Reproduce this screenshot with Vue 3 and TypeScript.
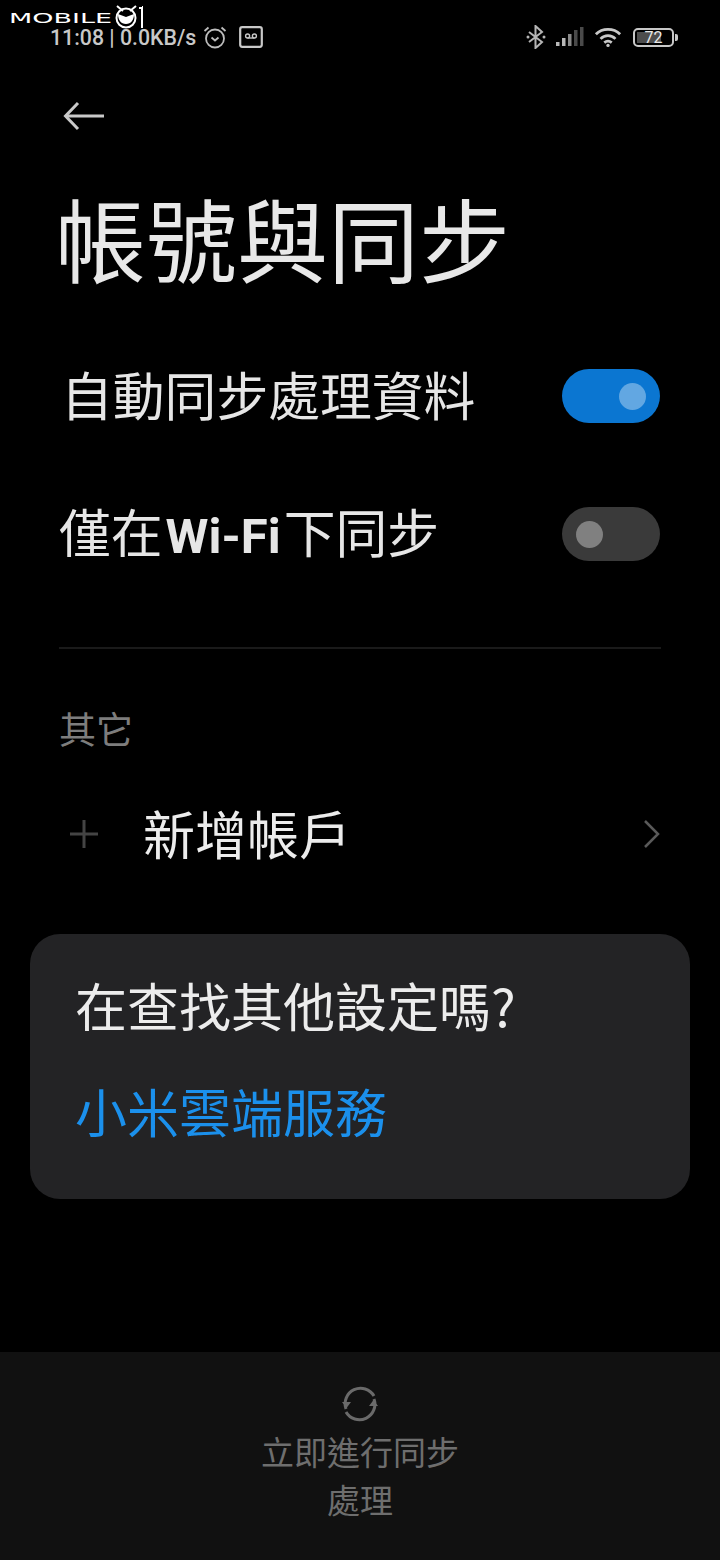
<script setup lang="ts">
const signalBars = [
  { x: 0, h: 4, o: 1 },
  { x: 6, h: 8, o: 1 },
  { x: 12, h: 12, o: 0.75 },
  { x: 18, h: 16, o: 0.4 },
  { x: 24, h: 19, o: 0.4 },
]

const settings = [
  { key: 'auto', before: '自動同步處理資料', latin: '', after: '', on: true, inset: true },
  { key: 'wifi', before: '僅在', latin: 'Wi-Fi', after: '下同步', on: false, inset: false },
]
</script>

<template>
  <div class="screen">
    <div class="watermark">
      <svg width="150" height="32" viewBox="0 0 150 32">
        <text x="9" y="23" textLength="103" lengthAdjust="spacingAndGlyphs" class="wm-text">MOBILE</text>
        <circle cx="126" cy="18" r="9.500" fill="none" stroke="#fff" stroke-width="2" />
        <path d="M117 6l6 5M136 6l-6 5" stroke="#fff" stroke-width="2" fill="none" />
        <path d="M118 14l8 3 8-3c0 6-3 10-8 10s-8-4-8-10z" fill="#fff" />
        <path d="M139 7h3V6h1v22h-2V9h-2z" fill="#fff" />
      </svg>
    </div>

    <header class="status">
      <div class="status-left">
        <span class="clock">11:08 | 0.0KB/s</span>
        <svg class="alarm" width="24" height="24" viewBox="0 0 24 24" fill="none" stroke="#bdbdbd" stroke-width="1.800">
          <circle cx="12" cy="13.500" r="9" />
          <path d="M8.500 12.500l3.500 3 3.500-3" />
          <path d="M1.500 6l4-3.500M22.500 6l-4-3.500" />
        </svg>
        <svg class="voicemail" width="24" height="22" viewBox="0 0 24 22" fill="none" stroke="#c8c8c8">
          <rect x="1.200" y="1.200" width="21.600" height="19.600" rx="2" stroke-width="2.200" />
          <circle cx="8.600" cy="10" r="2" stroke-width="1.400" />
          <circle cx="15.400" cy="10" r="2" stroke-width="1.400" />
          <path d="M8.600 12h6.800" stroke-width="1.400" />
        </svg>
      </div>
      <div class="status-right">
        <svg class="bt" width="20" height="24" viewBox="0 0 20 24" fill="none" stroke="#b5b5b5" stroke-width="2">
          <path d="M3 7l13 10-6.500 6V1L16 7 3 17" />
          <circle cx="2" cy="12" r="1.500" fill="#b5b5b5" stroke="none" />
          <circle cx="18" cy="12" r="1.500" fill="#b5b5b5" stroke="none" />
        </svg>
        <svg class="signal" width="28" height="20" viewBox="0 0 28 20">
          <rect v-for="b in signalBars" :key="b.x" :x="b.x" :y="19 - b.h" width="3.500" :height="b.h" fill="#b8b8b8" :opacity="b.o" />
        </svg>
        <svg class="wifi" width="28" height="22" viewBox="0 0 30 22" fill="none" stroke="#c8c8c8" stroke-width="3">
          <path d="M2 8c7-7 19-7 26 0" />
          <path d="M7 13c4.500-4.500 11.500-4.500 16 0" />
          <path d="M11 17c2.500-2 5.500-2 8 0" />
          <circle cx="15" cy="20" r="1.800" fill="#c8c8c8" stroke="none" />
        </svg>
        <div class="battery">
          <div class="battery-body">
            <div class="battery-fill"></div>
            <span class="battery-num">72</span>
          </div>
          <div class="battery-tip"></div>
        </div>
      </div>
    </header>

    <div class="nav">
      <svg width="42" height="32" viewBox="0 0 42 32" fill="none" stroke="#c9c9c9" stroke-width="3">
        <path d="M41 16H3" />
        <path d="M15 3L2.500 16 15 29" />
      </svg>
    </div>

    <h1 class="title">帳號與同步</h1>

    <section class="rows">
      <div v-for="s in settings" :key="s.key" class="row">
        <span class="row-label" :class="{ inset: s.inset }">{{ s.before }}<b v-if="s.latin" class="latin">{{ s.latin }}</b>{{ s.after }}</span>
        <div class="switch" :class="{ on: s.on }"><div class="knob"></div></div>
      </div>
    </section>

    <div class="divider"></div>

    <div class="section-title">其它</div>

    <div class="add-row">
      <svg class="plus" width="30" height="30" viewBox="0 0 30 30" stroke="#444" stroke-width="3">
        <path d="M15 1v28M1 15h28" />
      </svg>
      <span class="add-label">新增帳戶</span>
      <svg class="chevron" width="18" height="30" viewBox="0 0 18 30" fill="none" stroke="#5a5a5a" stroke-width="2.500">
        <path d="M3 2l13 13L3 28" />
      </svg>
    </div>

    <div class="card">
      <div class="card-q">在查找其他設定嗎?</div>
      <div class="card-link">小米雲端服務</div>
    </div>

    <footer class="bottom">
      <svg width="38" height="38" viewBox="0 0 38 38" fill="none" stroke="#6a6a6a" stroke-width="3">
        <path d="M5 24A15.500 15.500 0 0 1 33 11" />
        <path d="M33 14A15.500 15.500 0 0 1 5 27" />
        <path d="M1 17h9l-4.500 6zM37 21h-9l4.500-6z" fill="#6a6a6a" stroke="none" />
      </svg>
      <div class="bottom-label">立即進行同步<br />處理</div>
    </footer>
  </div>
</template>

<style scoped>
.screen {
  position: relative;
  width: 720px;
  height: 1560px;
  background: #000;
  color: #e6e6e6;
  font-family: "Noto Sans CJK TC", "Noto Sans", sans-serif;
  overflow: hidden;
  display: flex;
  flex-direction: column;
}

.watermark {
  position: absolute;
  left: 0;
  top: 0;
}

.wm-text {
  font-family: "DejaVu Sans", sans-serif;
  font-size: 14px;
  fill: #fff;
}

.status {
  height: 74px;
  box-sizing: border-box;
  padding: 24px 42px 0 50px;
  display: flex;
  justify-content: space-between;
  align-items: flex-start;
}

.status-left,
.status-right {
  display: flex;
  align-items: center;
  height: 26px;
}

.clock {
  font-family: Roboto, sans-serif;
  font-weight: 500;
  font-size: 21.300px;
  color: #c8c8c8;
}

.alarm {
  margin-left: 7px;
}

.voicemail {
  margin-left: 12px;
}

.bt {
  margin-right: 10px;
}

.signal {
  margin-right: 10px;
}

.wifi {
  margin-right: 11px;
}

.battery {
  display: flex;
  align-items: center;
  gap: 1px;
}

.battery-body {
  position: relative;
  width: 37px;
  height: 15px;
  border: 2px solid #c8c8c8;
  border-radius: 5px;
  box-sizing: content-box;
}

.battery-fill {
  position: absolute;
  left: 2px;
  top: 2px;
  bottom: 2px;
  width: 24px;
  background: #4d4d4d;
}

.battery-num {
  position: absolute;
  inset: 0;
  text-align: center;
  line-height: 16px;
  font-family: Roboto, sans-serif;
  font-size: 16px;
  color: #e8e8e8;
}

.battery-tip {
  width: 3px;
  height: 7px;
  background: #c8c8c8;
  border-radius: 0 2px 2px 0;
}

.nav {
  height: 84px;
  padding-left: 63px;
  display: flex;
  align-items: center;
}

.title {
  margin: 0;
  padding-left: 55px;
  font-size: 91px;
  font-weight: 400;
  line-height: 130px;
  height: 130px;
  margin-top: 13px;
  color: #e8e8e8;
}

.rows {
  margin-top: 26px;
}

.row {
  height: 138px;
  box-sizing: border-box;
  padding: 0 60px 0 59px;
  display: flex;
  justify-content: space-between;
  align-items: center;
}

.row-label {
  font-size: 51.800px;
  line-height: 70px;
}

.row-label.inset {
  padding-left: 2px;
  padding-bottom: 4px;
}

.latin {
  font-family: Roboto, sans-serif;
  font-weight: 700;
  font-size: 49px;
  margin: 0 3px;
}

.switch {
  width: 98px;
  height: 54px;
  border-radius: 27px;
  background: #3a3a3a;
  padding: 0 14px;
  box-sizing: border-box;
  display: flex;
  align-items: center;
}

.switch.on {
  background: #0b76d1;
  justify-content: flex-end;
}

.knob {
  width: 27px;
  height: 27px;
  border-radius: 50%;
  background: #808080;
}

.switch.on .knob {
  background: #62a7e2;
}

.divider {
  height: 2px;
  margin: 44px 59px 0 59px;
  background: #1a1a1a;
}

.section-title {
  margin-top: 54px;
  padding-left: 59px;
  font-size: 37px;
  line-height: 50px;
  color: #7d7d7d;
}

.add-row {
  margin-top: 56px;
  height: 50px;
  padding: 0 60px 0 69px;
  display: flex;
  align-items: center;
}

.add-label {
  margin-left: 44px;
  font-size: 52px;
  line-height: 50px;
  padding-bottom: 2px;
  color: #ececec;
}

.chevron {
  margin-left: auto;
}

.card {
  margin: 75px 30px 0;
  height: 265px;
  box-sizing: border-box;
  padding: 33px 45px 0;
  background: #232325;
  border-radius: 30px;
}

.card-q {
  font-size: 52px;
  line-height: 76px;
  color: #ececec;
}

.card-link {
  margin-top: 30px;
  font-size: 52px;
  line-height: 76px;
  color: #1b90ec;
}

.bottom {
  margin-top: auto;
  height: 208px;
  background: #111;
  box-sizing: border-box;
  padding-top: 33px;
  display: flex;
  flex-direction: column;
  align-items: center;
}

.bottom-label {
  margin-top: 4px;
  font-size: 33px;
  line-height: 48px;
  text-align: center;
  color: #6e6e6e;
}
</style>

<style>
body {
  background: #000;
}
</style>
